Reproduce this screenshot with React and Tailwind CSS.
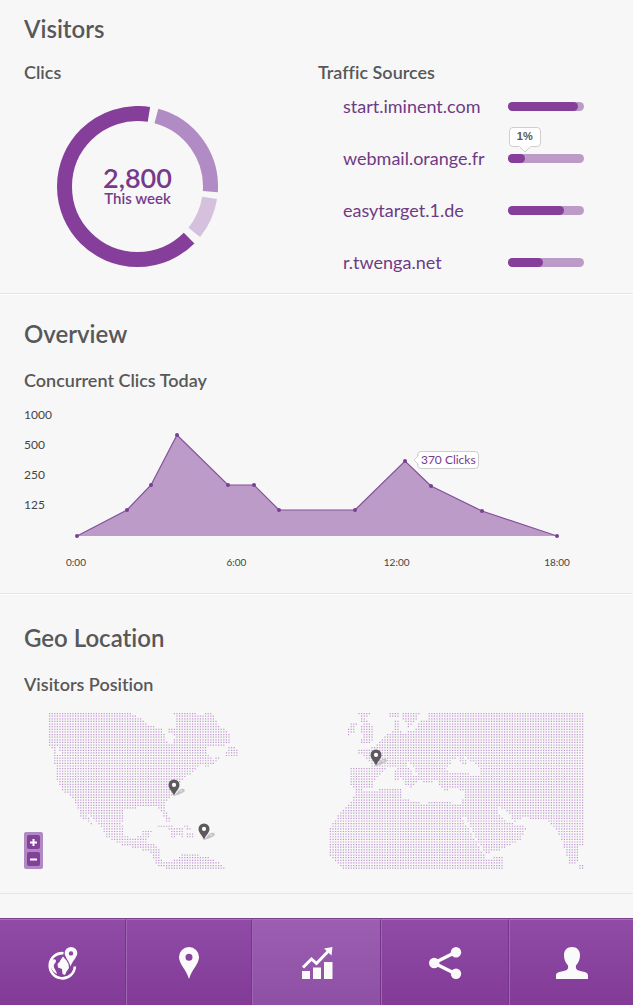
import React from "react";

const SEGMENTS = [
  { start: 135, sweep: 234, color: "#853f9a" },
  { start: 15, sweep: 79, color: "#b18bc3" },
  { start: 99, sweep: 30, color: "#d5c0de" },
];

const SOURCES = [
  { name: "start.iminent.com", share: 92 },
  { name: "webmail.orange.fr", share: 22, tip: "1%" },
  { name: "easytarget.1.de", share: 74 },
  { name: "r.twenga.net", share: 46 },
];

const CLICKS = [
  [5, 136], [55, 110], [79, 85], [105, 35], [156, 85], [182, 85],
  [207, 110], [283, 110], [333, 61], [359, 86], [410, 111], [485, 136],
];

const LAND = [
  // North and Central America
  "0,0 81,0 88,3 101,13 113,15 116,25 119,30 124,30 126,23 120,19 120,15 128,13 125,0 146,0 151,3 156,0 163,0 169,12 178,18 182,23 182,31 175,32 159,33 158,40 163,46 171,42 172,46 159,54 151,51 144,59 134,65 129,71 124,82 117,89 115,95 119,100 121,108 117,108 112,99 107,94 94,94 76,96 73,110 76,122 84,125 92,122 94,117 103,116 98,127 98,130 109,132 111,144 114,149 121,148 129,146 133,142 141,140 159,144 171,150 178,157 129,157 109,154 104,145 101,139 88,135 74,133 58,125 53,115 43,105 34,94 39,104 45,113 31,103 28,92 23,84 14,79 9,69 6,57 5,37 0,34",
  "178,32 187,35 190,44 184,44 173,42 178,38",
  "105,116 113,111 121,112 132,118 132,121 121,117 113,114",
  "122,117 133,115 136,120 134,124 128,123 124,127 122,122",
  "131,111 136,111 143,117 139,117",
  "137,121 146,121 146,126 138,125",
  // Europe, Asia and Africa
  "380,0 535,0 535,132 529,132 531,140 528,150 521,152 518,144 514,130 509,119 503,112 498,106 473,105 466,109 456,97 449,93 449,99 458,109 478,114 471,127 458,134 446,139 436,140 428,127 421,114 415,102 413,104 421,119 429,132 438,146 454,142 455,157 294,157 281,144 280,115 293,97 303,87 307,78 301,72 301,55 323,54 316,44 309,40 309,36 318,36 331,29 339,20 349,15 354,20 366,16 371,8 378,7",
  "339,0 351,0 349,5 342,5",
  "345,7 351,7 351,17 345,17",
  "354,0 371,0 366,9 359,14 354,7",
  "309,0 322,0 316,6 323,13 325,24 321,31 308,32 314,24 311,18 313,10",
  "301,10 308,10 304,21 298,22",
  "529,150 535,150 535,157 529,156",
];

// Land enclosed by a sea polygon
const ISLANDS = ["345,57 350,57 350,67 344,67"];

const WATER = [
  "6,34 10,34 11,40 7,40",
  "308,75 321,79 336,74 352,74 353,84 374,91 384,87 411,91 415,85 415,77 404,76 394,77 386,65 384,70 376,71 370,67 363,74 354,73 358,70 349,61 347,55 339,55 326,67 323,74",
  "357,50 361,50 369,62 366,64",
  "398,55 403,47 408,44 413,50 418,52 416,44 419,46 431,55 429,63 418,60 408,59 399,61",
];

const parse = (s) => s.split(" ").map((p) => p.split(",").map(Number));

function inside(x, y, poly) {
  let hit = false;
  for (let i = 0, j = poly.length - 1; i < poly.length; j = i++) {
    const [xi, yi] = poly[i];
    const [xj, yj] = poly[j];
    if (yi > y !== yj > y && x < ((xj - xi) * (y - yi)) / (yj - yi) + xi) hit = !hit;
  }
  return hit;
}

function mapDots() {
  const land = LAND.map(parse);
  const sea = WATER.map(parse);
  const islands = ISLANDS.map(parse);
  const within = (x, y) => (poly) => inside(x, y, poly);
  let d = "";
  for (let r = 0; r < 60; r++) {
    for (let c = 0; c < 206; c++) {
      const x = c * 2.6 + 0.5;
      const y = r * 2.62 + 0.5;
      const at = within(x, y);
      if ((land.some(at) && !sea.some(at)) || islands.some(at)) {
        d += `M${(x - 0.5).toFixed(2)} ${(y - 0.5).toFixed(2)}h1.2v1.2h-1.2z`;
      }
    }
  }
  return d;
}

const DOTS = mapDots();
const PINS = [[125, 83], [155, 127], [327, 53]];

function Title({ children }) {
  return <h2 className="text-2xl leading-8 font-semibold text-[#585858]">{children}</h2>;
}

function Subtitle({ children }) {
  return <h3 className="text-lg leading-6 font-semibold text-[#585858]">{children}</h3>;
}

function Donut() {
  return (
    <div className="relative mt-[22px] ml-[33px] w-[161px]">
      <svg viewBox="0 0 161 161" className="block w-full" aria-hidden="true">
        {SEGMENTS.map((s) => (
          <circle
            key={s.start}
            cx="80.5"
            cy="80.5"
            r="73"
            fill="none"
            stroke={s.color}
            strokeWidth="15"
            pathLength="360"
            strokeDasharray={`${s.sweep} ${360 - s.sweep}`}
            transform={`rotate(${s.start - 90} 80.5 80.5)`}
          />
        ))}
      </svg>
      <p className="absolute inset-0 flex flex-col items-center justify-center pb-1 text-[#763a8c]">
        <span className="text-[27px] leading-[26px] font-semibold">2,800</span>
        <span className="text-[15px] leading-[14px] font-semibold">This week</span>
      </p>
    </div>
  );
}

function Source({ name, share, tip }) {
  return (
    <li className="flex items-center justify-between">
      <a href="#source" className="text-lg leading-6 text-[#6f3a84]">{name}</a>
      <div className="relative h-[9px] w-[76px] rounded-full bg-[#bd9bc9]">
        <div className="relative h-full rounded-full bg-[#853f9a]" style={{ width: `${share}%` }}>
          {tip && (
            <span className="absolute bottom-4 left-full flex h-5 w-8 -translate-x-1/2 items-center justify-center rounded border border-[#cfcfcf] bg-white font-['Liberation_Sans'] text-[11px] font-bold text-[#585858]">
              {tip}
              <svg viewBox="0 0 12 7" className="absolute -bottom-[7px] left-[9px] w-3" aria-hidden="true">
                <path d="M0 0H12L6 6z" fill="#fff" />
                <path d="M1 1L6 6L11 1" fill="none" stroke="#cfcfcf" />
              </svg>
            </span>
          )}
        </div>
      </div>
    </li>
  );
}

function ClicksChart() {
  const line = CLICKS.map((p) => p.join(" ")).join("L");
  return (
    <>
      <div className="mt-2 flex items-start pr-[72px] pl-6">
        <ul className="w-12 shrink-0 text-xs leading-[30px] text-[#444]">
          <li>1000</li>
          <li>500</li>
          <li>250</li>
          <li>125</li>
        </ul>
        <div className="relative flex-1">
          <svg viewBox="0 0 489 138" className="block w-full" role="img" aria-label="Concurrent clics today">
            <path d={`M${line}z`} fill="#bd9bc9" />
            <path d={`M${line}`} fill="none" stroke="#83509a" strokeWidth="1.2" />
            {CLICKS.map(([x, y]) => (
              <circle key={x} cx={x} cy={y} r="2" fill="#793f92" />
            ))}
          </svg>
          <span className="absolute top-[37%] left-[70%] ml-[3px] flex h-[18px] w-[62px] items-center justify-center rounded border border-[#cfcfcf] bg-white text-xs whitespace-nowrap text-[#763a8c]">
            <svg viewBox="0 0 6 10" className="absolute top-[3px] -left-[5px] h-2.5" aria-hidden="true">
              <path d="M6 0V10L1 5z" fill="#fff" />
              <path d="M5.500 .5L1 5L5.500 9.500" fill="none" stroke="#cfcfcf" />
            </svg>
            370 Clicks
          </span>
        </div>
      </div>
      <ul className="mx-14 mt-4 flex justify-between text-[10px] leading-4 text-[#444]">
        {["0:00", "6:00", "12:00", "18:00"].map((t) => (
          <li key={t} className="w-10 text-center">{t}</li>
        ))}
      </ul>
    </>
  );
}

function VisitorMap() {
  return (
    <div className="relative mt-[17px]">
      <div className="px-12">
        <svg viewBox="-1 0 537 156" className="block w-full" role="img" aria-label="Visitors position">
          <path d={DOTS} fill="#c199d0" />
          {PINS.map(([x, y]) => (
            <g key={x} transform={`translate(${x} ${y})`}>
              <path d="M0 0C3-3 4-6 7-7C10-8 12-6 10-4C7-2 3-1 0 0z" fill="#c6c2c8" />
              <ellipse cx="7" cy="-5" rx="1.500" ry=".8" fill="#e4e0e6" />
              <path
                d="M0 0C-1-4-5.500-7-5.500-11A5.500 5.500 0 0 1 5.500-11C5.500-7 1-4 0 0z"
                fill="#5c5a5e"
              />
              <circle cx="0" cy="-11.100" r="2.100" fill="#fff" />
            </g>
          ))}
        </svg>
      </div>
      <div className="absolute bottom-0 left-6 flex flex-col gap-[3px] rounded-xs bg-[#b088c4] p-[3px]">
        {["Zoom in", "Zoom out"].map((label) => (
          <button key={label} aria-label={label} className="flex h-3.5 w-[13px] items-center justify-center rounded-xs bg-[#85409a]">
            <svg viewBox="0 0 7 7" className="w-[7px]" aria-hidden="true">
              <path d={label === "Zoom in" ? "M0 3.500H7M3.500 0V7" : "M0 3.500H7"} stroke="#fff" strokeWidth="2" />
            </svg>
          </button>
        ))}
      </div>
    </div>
  );
}

const ICONS = {
  World: (
    <>
      <path d="M16.500 6.200A12.600 12.600 0 1 0 27.900 19.500" fill="none" stroke="#fff" strokeWidth="2.600" />
      <path d="M3.500 13.500C6 11.500 9.500 12 9 14.500C8.500 16.500 6.500 17 6.800 19.500C7 22 9.500 23.500 10 27C6 25.500 2.500 21 3.500 13.500z" />
      <path d="M13.500 13L16 9.500L19.500 13.500L21.500 17L22 21L19.500 24.500L18 28L15.500 27L15 22L11 20.500L10.500 17L12.500 15z" />
      <path
        d="M24 0A6.300 6.300 0 0 1 30.300 6.300C30.300 10 25.500 14 23.500 19.500C22 14 17.700 10 17.700 6.300A6.300 6.300 0 0 1 24 0zM24 4.200A2.200 2.200 0 1 0 24 8.600A2.200 2.200 0 1 0 24 4.200z"
        fillRule="evenodd"
      />
    </>
  ),
  Places: (
    <path
      d="M16 0A10 10 0 0 1 26 10C26 17 19 22 16 32C13 22 6 17 6 10A10 10 0 0 1 16 0zM16 6.700A3.500 3.500 0 1 0 16 13.700A3.500 3.500 0 1 0 16 6.700z"
      fillRule="evenodd"
    />
  ),
  Statistics: (
    <>
      <path d="M1 24H9V32H1zM12 20.500H20V32H12zM23 15H31.500V32H23z" />
      <path d="M2 20.500L10.500 12L15.500 16.500L27 4.500" fill="none" stroke="#fff" strokeWidth="3" />
      <path d="M31.500 0L30.500 8.500L23 1.500z" />
    </>
  ),
  Share: (
    <>
      <path d="M27 5L5 16L27 27" fill="none" stroke="#fff" strokeWidth="3.400" />
      <circle cx="5.200" cy="16" r="5.200" />
      <circle cx="27" cy="5.200" r="5.200" />
      <circle cx="27" cy="26.800" r="5.200" />
    </>
  ),
  Profile: (
    <path d="M16 0C21 0 24 3 24 8.500C24 12.500 22.500 15.500 20 18.500C19.500 21 20 22.500 22.500 23.500C28 25 32 25 32 28.500V32H0V28.500C0 25 4 25 9.500 23.500C12 22.500 12.500 21 12 18.500C9.500 15.500 8 12.500 8 8.500C8 3 11 0 16 0z" />
  ),
};

function NavBar() {
  return (
    <nav className="mt-6 grid grid-cols-[126fr_126fr_129fr_128fr_124fr] border-t border-[#7b4190]">
      {Object.keys(ICONS).map((name) => {
        const tone =
          name === "Statistics"
            ? "from-[#9c5eb1] to-[#8e50a4]"
            : "from-[#8f4ba6] to-[#823b97]";
        return (
          <a
            key={name}
            href={`#${name.toLowerCase()}`}
            aria-label={name}
            aria-current={name === "Statistics" ? "page" : undefined}
            className={`flex h-[86px] items-center justify-center border-t border-r border-l border-t-[#a96fbc] border-r-[#74358a] border-l-[#a066b3] bg-linear-to-b first:border-l-0 last:border-r-0 ${tone}`}
          >
            <svg viewBox="0 0 32 32" className="size-8 overflow-visible" fill="#fafafa" aria-hidden="true">
              {ICONS[name]}
            </svg>
          </a>
        );
      })}
    </nav>
  );
}

export default function App() {
  return (
    <div className="bg-[#f7f7f7] font-['Lato',sans-serif] [font-variant-ligatures:no-common-ligatures]">
      <section className="border-b border-[#e6e6e6] px-6 pt-[13px] pb-[19px]">
        <Title>Visitors</Title>
        <div className="mt-[15px] grid grid-cols-2 gap-[3px]">
          <div>
            <Subtitle>Clics</Subtitle>
            <Donut />
          </div>
          <div>
            <Subtitle>Traffic Sources</Subtitle>
            <ul className="mt-2.5 flex flex-col gap-7 px-[25px]">
              {SOURCES.map((s) => (
                <Source key={s.name} {...s} />
              ))}
            </ul>
          </div>
        </div>
      </section>

      <section className="border-t border-b border-t-white border-b-[#e6e6e6] pt-[23px] pb-[23px]">
        <div className="flex flex-col gap-[18px] px-6">
          <Title>Overview</Title>
          <Subtitle>Concurrent Clics Today</Subtitle>
        </div>
        <ClicksChart />
      </section>

      <section className="border-t border-b border-t-white border-b-[#e6e6e6] pt-[27px] pb-6">
        <div className="flex flex-col gap-[18px] px-6">
          <Title>Geo Location</Title>
          <Subtitle>Visitors Position</Subtitle>
        </div>
        <VisitorMap />
      </section>

      <NavBar />
    </div>
  );
}
